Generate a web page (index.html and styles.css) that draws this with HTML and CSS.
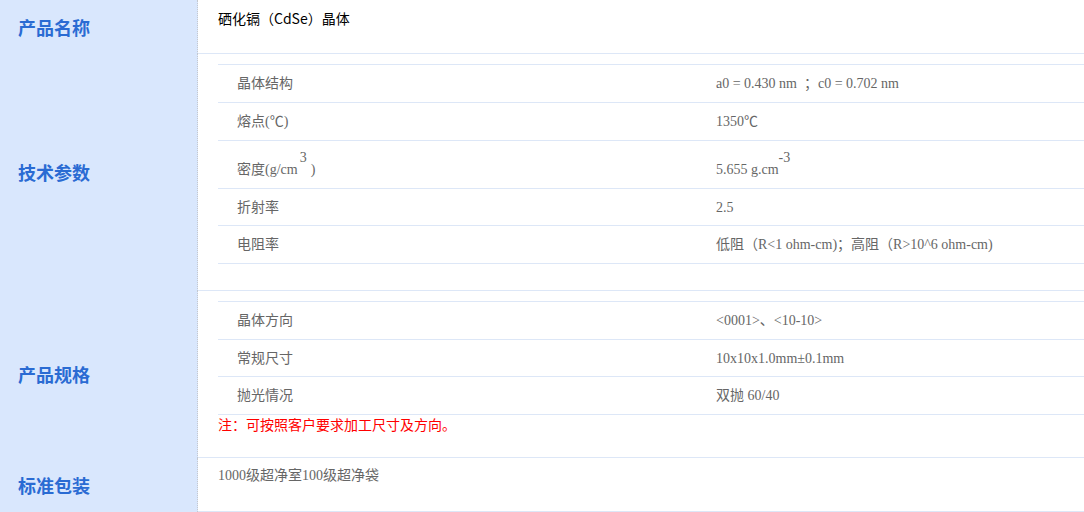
FILE: index.html
```html
<!DOCTYPE html>
<html lang="zh-CN">
<head>
<meta charset="utf-8">
<title>硒化镉（CdSe）晶体</title>
<link rel="stylesheet" href="styles.css">
</head>
<body>
<div class="spec">
  <div class="row">
    <div class="label">产品名称</div>
    <div class="cell cell-name">硒化镉（CdSe）晶体</div>
  </div>
  <div class="row">
    <div class="label">技术参数</div>
    <div class="cell cell-params">
      <div class="table">
        <div class="trow"><div class="tc">晶体结构</div><div class="tc">a0 = 0.430 nm &nbsp;；c0 = 0.702 nm</div></div>
        <div class="trow"><div class="tc">熔点(℃)</div><div class="tc">1350℃</div></div>
        <div class="trow trow-sup"><div class="tc">密度(g/cm<sup class="sup sup-gap">3</sup>)</div><div class="tc">5.655 g.cm<sup class="sup">-3</sup></div></div>
        <div class="trow trow-short"><div class="tc">折射率</div><div class="tc">2.5</div></div>
        <div class="trow"><div class="tc">电阻率</div><div class="tc">低阻（R&lt;1 ohm-cm)；高阻（R&gt;10^6 ohm-cm)</div></div>
      </div>
    </div>
  </div>
  <div class="row">
    <div class="label">产品规格</div>
    <div class="cell cell-specs">
      <div class="table">
        <div class="trow"><div class="tc">晶体方向</div><div class="tc">&lt;0001&gt;、&lt;10-10&gt;</div></div>
        <div class="trow trow-short"><div class="tc">常规尺寸</div><div class="tc">10x10x1.0mm±0.1mm</div></div>
        <div class="trow"><div class="tc">抛光情况</div><div class="tc">双抛 60/40</div></div>
      </div>
      <p class="note">注：可按照客户要求加工尺寸及方向。</p>
    </div>
  </div>
  <div class="row">
    <div class="label">标准包装</div>
    <div class="cell cell-pack">1000级超净室100级超净袋</div>
  </div>
</div>
</body>
</html>
```

FILE: styles.css
```css
html, body {
  margin: 0;
  padding: 0;
  background: #ffffff;
}

.spec {
  width: 1084px;
  font-family: "Liberation Serif", "Noto Sans CJK SC", serif;
  font-size: 14px;
  color: #666666;
}

.row {
  display: grid;
  grid-template-columns: 198px 1fr;
}

.label {
  display: flex;
  align-items: center;
  padding-left: 18px;
  padding-bottom: 1px;
  background: #d9e7fd;
  border-right: 1px dotted #c4c8cf;
  font-family: "Noto Sans CJK SC", sans-serif;
  font-weight: 700;
  font-size: 18px;
  color: #2a6bd3;
}

.cell {
  border-bottom: 1px solid #dde7f7;
  box-sizing: border-box;
}

.cell-name {
  height: 54px;
  padding: 8px 20px 0;
  font-family: "Noto Sans CJK SC", sans-serif;
  line-height: 20px;
  color: #000000;
}

.cell-params {
  padding: 10px 0 26px 20px;
}

.cell-specs {
  padding: 10px 0 0 20px;
}

.cell-pack {
  height: 54px;
  padding: 8px 20px 0;
  line-height: 20px;
}

.table {
  border-bottom: 1px solid #dde7f7;
}

.trow {
  display: grid;
  grid-template-columns: 479px 1fr;
  border-top: 1px solid #dde7f7;
  line-height: 21px;
}

.tc {
  padding: 8px 0 8px 19px;
}

.trow-short .tc {
  padding-bottom: 7px;
}

.trow-sup .tc {
  padding-top: 17px;
}

.sup {
  font-size: 14px;
  line-height: 0;
  vertical-align: 12px;
}

.sup-gap {
  margin: 0 4px 0 2px;
}

.note {
  margin: 0;
  padding: 0 0 24px;
  font-family: "Noto Sans CJK SC", sans-serif;
  line-height: 18px;
  color: #ff0000;
}
```
